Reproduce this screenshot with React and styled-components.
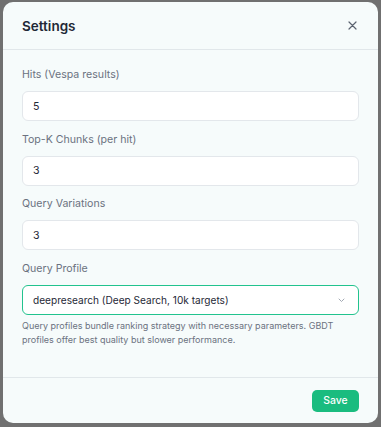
import React, { useState } from "react";
import styled, { createGlobalStyle } from "styled-components";

const GlobalStyle = createGlobalStyle`
  html, body {
    margin: 0;
    padding: 0;
    background: #707070;
    font-family: Inter, "Noto Sans", sans-serif;
  }
`;

const Modal = styled.div`
  margin: 2px 3px;
  width: 375px;
  height: 421px;
  background: #f6fbfb;
  border-radius: 10px;
  overflow: hidden;
  display: flex;
  flex-direction: column;
`;

const Header = styled.div`
  height: 47px;
  padding: 0 19px;
  display: flex;
  align-items: center;
  justify-content: space-between;
  border-bottom: 1px solid #e1e7ea;
`;

const Title = styled.h2`
  margin: 0;
  font-size: 13.5px;
  font-weight: 600;
  color: #1f2937;
`;

const CloseButton = styled.button`
  border: none;
  background: none;
  padding: 0;
  margin-right: 2px;
  display: flex;
  color: #5b6370;
  cursor: pointer;
`;

const Body = styled.div`
  flex: 1;
  padding: 17px 19px 0;
  display: flex;
  flex-direction: column;
  gap: 10.7px;
`;

const Field = styled.div`
  display: flex;
  flex-direction: column;
`;

const Label = styled.label`
  font-size: 10.6px;
  line-height: 16px;
  color: #6b7280;
  margin-bottom: 8px;
`;

const Input = styled.input`
  box-sizing: border-box;
  height: 30px;
  width: 100%;
  padding: 0 10px;
  border: 1px solid #e3e7eb;
  border-radius: 6px;
  background: #fff;
  font-family: inherit;
  font-size: 10.6px;
  color: #1f2937;
  outline: none;
`;

const SelectBox = styled.div`
  box-sizing: border-box;
  height: 30px;
  padding: 0 13px 0 10px;
  border: 1px solid ${(p) => (p.$focused ? "#22c38e" : "#e3e7eb")};
  border-radius: 6px;
  background: #fff;
  display: flex;
  align-items: center;
  justify-content: space-between;
  font-size: 10.1px;
  color: #1f2937;
`;

const Help = styled.p`
  margin: 4px 0 0;
  font-size: 9px;
  line-height: 14px;
  color: #6b7280;
`;

const Footer = styled.div`
  height: 45px;
  padding: 0 19px;
  border-top: 1px solid #e1e7ea;
  display: flex;
  align-items: center;
  justify-content: flex-end;
`;

const SaveButton = styled.button`
  height: 22px;
  width: 47px;
  padding: 0;
  border: none;
  border-radius: 5px;
  background: #1abc7f;
  color: #fff;
  font-family: inherit;
  font-size: 10.4px;
  font-weight: 500;
  cursor: pointer;
`;

const fields = [
  { label: "Hits (Vespa results)", value: "5" },
  { label: "Top-K Chunks (per hit)", value: "3" },
  { label: "Query Variations", value: "3" },
];

export default function App() {
  const [values, setValues] = useState(fields.map((f) => f.value));

  return (
    <>
      <GlobalStyle />
      <Modal>
        <Header>
          <Title>Settings</Title>
          <CloseButton aria-label="Close">
            <svg width="9" height="9" viewBox="0 0 9 9">
              <path d="M1 1L8 8M8 1L1 8" stroke="currentColor" strokeWidth="1.2" strokeLinecap="round" />
            </svg>
          </CloseButton>
        </Header>
        <Body>
          {fields.map((f, i) => (
            <Field key={f.label}>
              <Label>{f.label}</Label>
              <Input
                value={values[i]}
                onChange={(e) => {
                  const next = [...values];
                  next[i] = e.target.value;
                  setValues(next);
                }}
              />
            </Field>
          ))}
          <Field>
            <Label>Query Profile</Label>
            <SelectBox $focused>
              <span>deepresearch (Deep Search, 10k targets)</span>
              <svg width="7" height="5" viewBox="0 0 7 5">
                <path d="M1 1L3.5 3.5L6 1" fill="none" stroke="#a3a9b3" strokeWidth="1" strokeLinecap="round" strokeLinejoin="round" />
              </svg>
            </SelectBox>
            <Help>
              Query profiles bundle ranking strategy with necessary parameters. GBDT profiles offer best quality but slower performance.
            </Help>
          </Field>
        </Body>
        <Footer>
          <SaveButton>Save</SaveButton>
        </Footer>
      </Modal>
    </>
  );
}
